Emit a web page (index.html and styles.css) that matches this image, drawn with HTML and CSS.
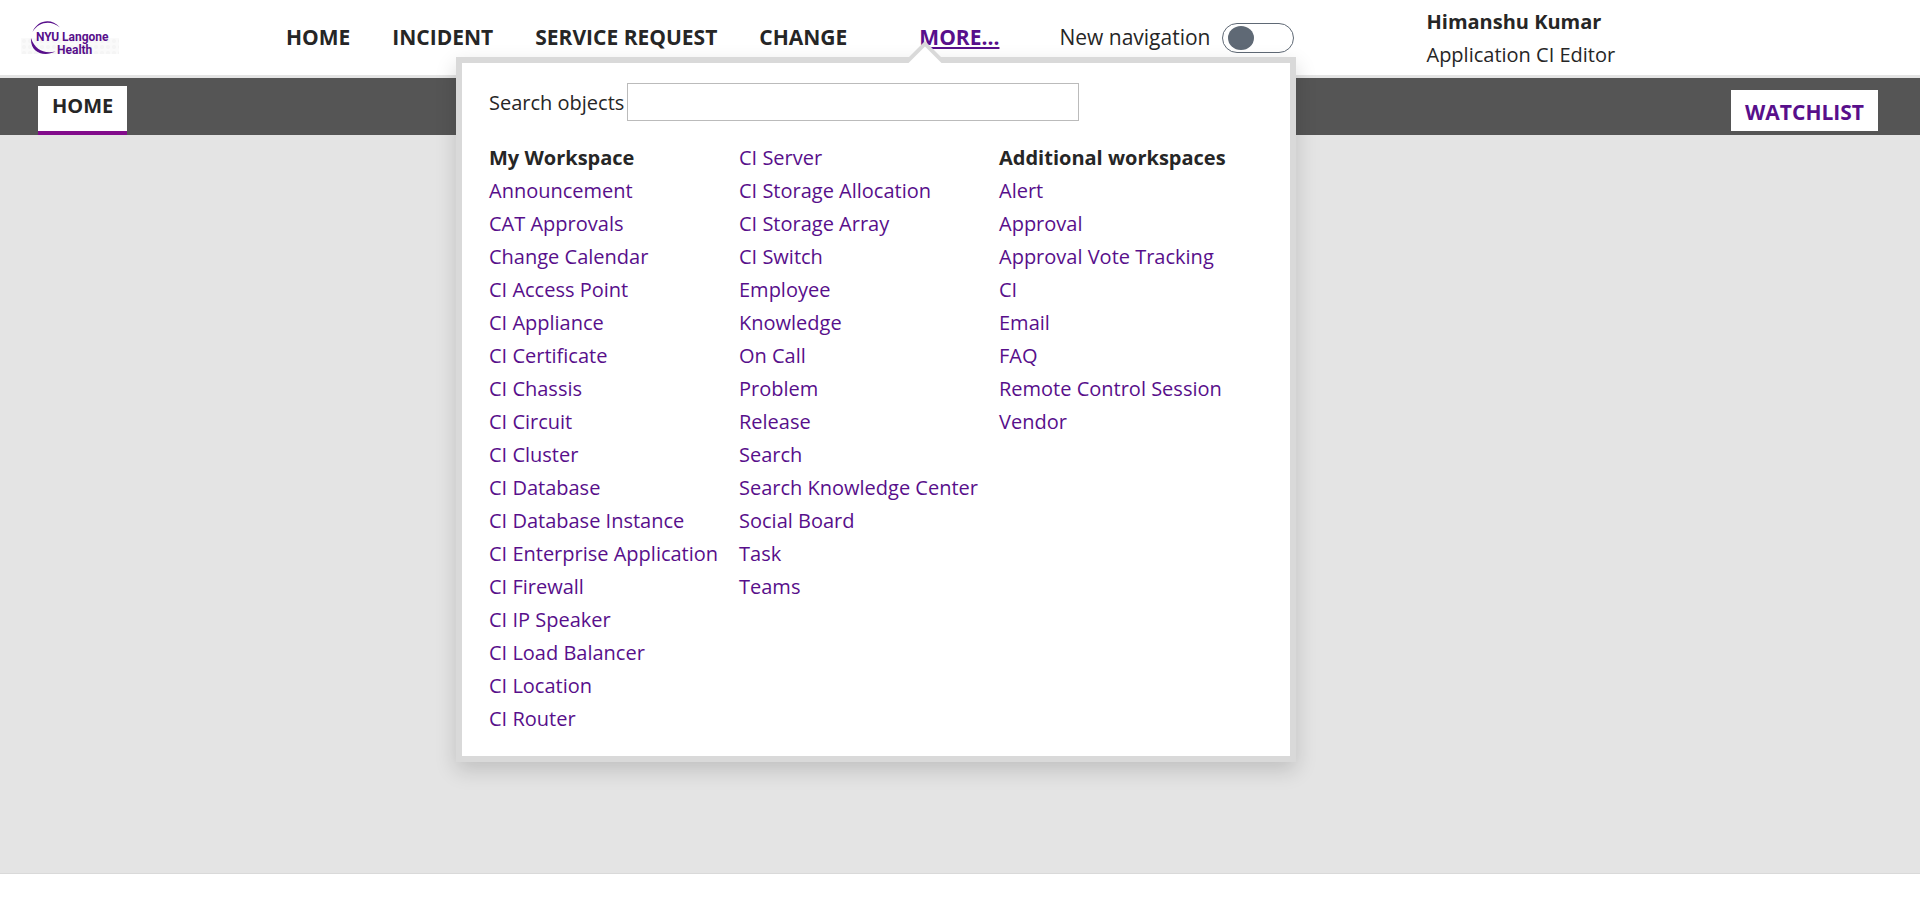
FILE: index.html
```html
<!DOCTYPE html>
<html lang="en">
<head>
<meta charset="utf-8">
<title>Home</title>
<link rel="stylesheet" href="styles.css">
</head>
<body>
<header class="header">
  <a class="logo" href="#" aria-label="NYU Langone Health">
    <svg class="logo-art" width="98" height="36" viewBox="0 0 98 36">
      <defs>
        <pattern id="speckle" width="6" height="6" patternUnits="userSpaceOnUse">
          <rect width="6" height="6" fill="#fafafa"/>
          <circle cx="3" cy="3" r="2" fill="#f5f5f5"/>
        </pattern>
      </defs>
      <rect x="0" y="18" width="98" height="16" fill="url(#speckle)"/>
      <path d="M11.500 12C16 .5 30-3 39 7.500C30 0 18 1.500 11.500 12Z" fill="#580f8b"/>
      <path d="M10 18C9 32 22 37.500 34.500 31.500C23 34 14 30 10 18Z" fill="#580f8b"/>
      <text class="logo-text" x="15" y="21">NYU</text>
      <text class="logo-text" x="41" y="21">Langone</text>
      <text class="logo-text" x="36" y="34">Health</text>
    </svg>
  </a>
  <nav class="main-nav">
    <a href="#">HOME</a>
    <a href="#">INCIDENT</a>
    <a href="#">SERVICE REQUEST</a>
    <a href="#">CHANGE</a>
    <a class="more" href="#">MORE...</a>
  </nav>
  <div class="switch">
    <label for="new-nav">New navigation</label>
    <input class="toggle" type="checkbox" id="new-nav">
  </div>
  <div class="user">
    <strong>Himanshu Kumar</strong>
    <span>Application CI Editor</span>
  </div>
  <section class="panel">
    <svg class="panel-arrow" width="44" height="22" viewBox="0 0 44 22">
      <path d="M0 22 22 0 44 22Z" fill="#d9d9d9"/>
      <path d="M5.500 22 22 5.500 38.500 22Z" fill="#fff"/>
    </svg>
    <div class="search">
      <label for="search-objects">Search objects</label>
      <input class="search-box" type="text" id="search-objects">
    </div>
    <div class="columns">
      <ul class="links">
        <li><h2>My Workspace</h2></li>
        <li><a href="#">Announcement</a></li>
        <li><a href="#">CAT Approvals</a></li>
        <li><a href="#">Change Calendar</a></li>
        <li><a href="#">CI Access Point</a></li>
        <li><a href="#">CI Appliance</a></li>
        <li><a href="#">CI Certificate</a></li>
        <li><a href="#">CI Chassis</a></li>
        <li><a href="#">CI Circuit</a></li>
        <li><a href="#">CI Cluster</a></li>
        <li><a href="#">CI Database</a></li>
        <li><a href="#">CI Database Instance</a></li>
        <li><a href="#">CI Enterprise Application</a></li>
        <li><a href="#">CI Firewall</a></li>
        <li><a href="#">CI IP Speaker</a></li>
        <li><a href="#">CI Load Balancer</a></li>
        <li><a href="#">CI Location</a></li>
        <li><a href="#">CI Router</a></li>
      </ul>
      <ul class="links">
        <li><a href="#">CI Server</a></li>
        <li><a href="#">CI Storage Allocation</a></li>
        <li><a href="#">CI Storage Array</a></li>
        <li><a href="#">CI Switch</a></li>
        <li><a href="#">Employee</a></li>
        <li><a href="#">Knowledge</a></li>
        <li><a href="#">On Call</a></li>
        <li><a href="#">Problem</a></li>
        <li><a href="#">Release</a></li>
        <li><a href="#">Search</a></li>
        <li><a href="#">Search Knowledge Center</a></li>
        <li><a href="#">Social Board</a></li>
        <li><a href="#">Task</a></li>
        <li><a href="#">Teams</a></li>
      </ul>
      <ul class="links">
        <li><h2>Additional workspaces</h2></li>
        <li><a href="#">Alert</a></li>
        <li><a href="#">Approval</a></li>
        <li><a href="#">Approval Vote Tracking</a></li>
        <li><a href="#">CI</a></li>
        <li><a href="#">Email</a></li>
        <li><a href="#">FAQ</a></li>
        <li><a href="#">Remote Control Session</a></li>
        <li><a href="#">Vendor</a></li>
      </ul>
    </div>
  </section>
</header>
<div class="tab-bar">
  <a class="tab" href="#">HOME</a>
  <button class="watchlist" type="button">WATCHLIST</button>
</div>
<main class="workspace"></main>
<footer class="footer"></footer>
</body>
</html>
```
FILE: styles.css
```css
* {
  box-sizing: border-box;
}

body {
  display: flex;
  flex-direction: column;
  min-height: 100vh;
  margin: 0;
  background: #fff;
  color: #262626;
  font-family: "Open Sans", sans-serif;
  font-size: 20px;
  line-height: 33px;
}

a {
  color: #580f8b;
  text-decoration: none;
}

.header {
  position: relative;
  display: flex;
  align-items: center;
  height: 78px;
  padding: 0 21px;
  border-bottom: 3px solid #e4e4e4;
  white-space: nowrap;
}

.logo {
  display: flex;
  margin-right: 167px;
}

.logo-text {
  fill: #580f8b;
  font-family: Roboto, "Liberation Sans", sans-serif;
  font-size: 12px;
  font-weight: 700;
}

.main-nav {
  display: flex;
  gap: 42px;
  font-size: 21px;
  font-weight: 700;
}

.main-nav a {
  color: #262626;
}

.main-nav .more {
  margin-left: 30px;
  color: #580f8b;
  text-decoration: underline;
}

.switch {
  display: flex;
  align-items: center;
  gap: 12px;
  margin-left: 60px;
  font-size: 21px;
}

.toggle {
  display: flex;
  align-items: center;
  width: 72px;
  height: 30px;
  margin: 0;
  padding: 0 5px;
  border: 1px solid #5f6975;
  border-radius: 15px;
  background: #fff;
  appearance: none;
}

.toggle::before {
  width: 26px;
  height: 24px;
  border-radius: 50%;
  background: #5f6975;
  content: "";
}

.user {
  display: flex;
  flex-direction: column;
  margin-left: 132px;
}

.panel {
  position: absolute;
  top: 57px;
  left: 456px;
  z-index: 1;
  width: 840px;
  padding: 20px 27px 21px;
  border: 6px solid #d9d9d9;
  background: #fff;
  box-shadow: 0 8px 20px rgba(0, 0, 0, 0.16);
}

.panel-arrow {
  position: absolute;
  top: -22px;
  left: 441px;
}

.search {
  display: flex;
  align-items: center;
  gap: 3px;
  margin-bottom: 20px;
}

.search-box {
  width: 452px;
  height: 38px;
  padding: 0 8px;
  border: 1px solid #bbb;
  background: #fff;
  font: inherit;
}

.columns {
  display: grid;
  grid-template-columns: 250px 260px 1fr;
}

.links {
  margin: 0;
  padding: 0;
  list-style: none;
}

.links h2 {
  margin: 0;
  font-size: 20px;
  font-weight: 700;
}

.tab-bar {
  display: flex;
  justify-content: space-between;
  align-items: flex-end;
  height: 57px;
  padding: 0 42px 0 38px;
  background: #555;
}

.tab {
  height: 49px;
  padding: 3px 14px 0;
  border-bottom: 4px solid #820b8b;
  background: #fff;
  color: #262626;
  font-weight: 700;
}

.watchlist {
  height: 41px;
  margin-bottom: 4px;
  padding: 4px 14px 0;
  border: 0;
  background: #fff;
  color: #580f8b;
  font: inherit;
  font-size: 21px;
  font-weight: 700;
}

.workspace {
  flex: 1;
  border-bottom: 1px solid #d9d9d9;
  background: #e4e4e4;
}

.footer {
  height: 46px;
}
```
